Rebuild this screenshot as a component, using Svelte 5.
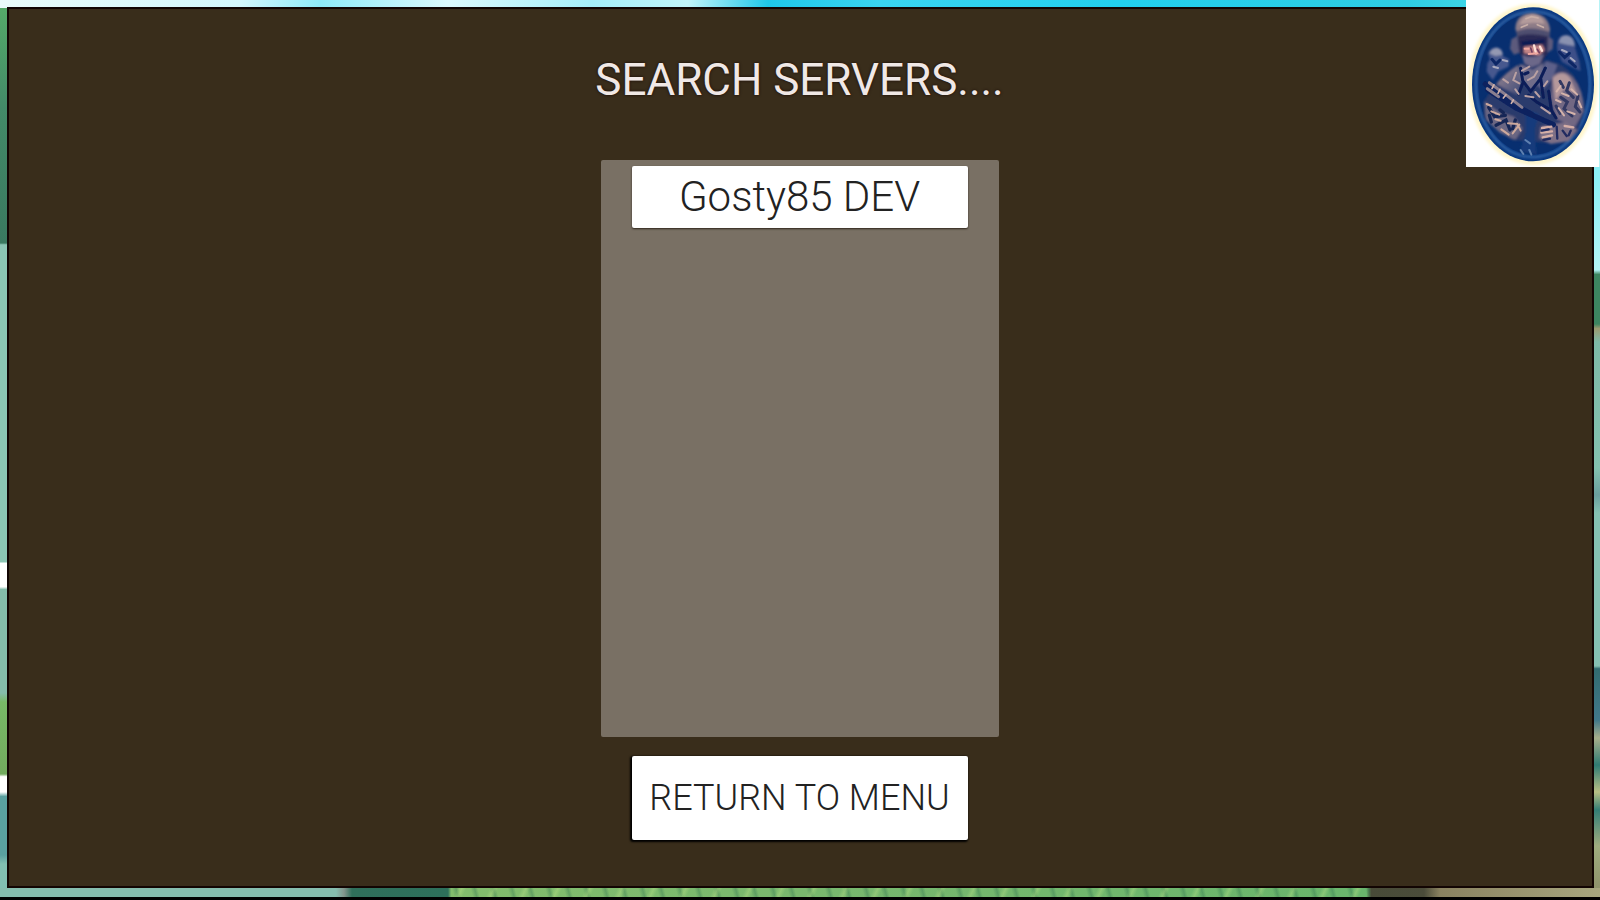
<script>
  const servers = [{ id: 1, name: 'Gosty85 DEV' }];
</script>

<div class="scene">
  <main class="panel">
    <h1>SEARCH SERVERS....</h1>
    <ul class="servers">
      {#each servers as server (server.id)}
        <li><button class="btn server" type="button">{server.name}</button></li>
      {/each}
    </ul>
    <button class="btn back" type="button">RETURN TO MENU</button>
  </main>

  <div class="logo">
    <svg viewBox="48 0 402 501" preserveAspectRatio="none" aria-hidden="true">
      <defs>
        <clipPath id="medal"><ellipse cx="249" cy="253" rx="183" ry="231" /></clipPath>
        <linearGradient id="cloth" x1="0" y1="0" x2="1" y2="1">
          <stop offset="0" stop-color="#a08a92" />
          <stop offset="1" stop-color="#3d4a78" />
        </linearGradient>
        <filter id="halo"><feGaussianBlur stdDeviation="5" /></filter>
        <filter id="soft"><feGaussianBlur stdDeviation="3" /></filter>
        <filter id="fine"><feGaussianBlur stdDeviation="2" /></filter>
      </defs>
      <ellipse cx="249" cy="253" rx="194" ry="242" fill="#fff6cc" filter="url(#halo)" />
      <g clip-path="url(#medal)">
        <rect x="48" width="402" height="501" fill="#0a3880" />
        <ellipse cx="249" cy="253" rx="171" ry="218" fill="none" stroke="#2f62a4" stroke-width="7" filter="url(#soft)" />
        <ellipse cx="249" cy="253" rx="164" ry="211" fill="#082f70" />
        <g filter="url(#soft)">
          <path d="M110 215 L112 190 L120 178 L114 160 Q122 142 140 142 Q160 145 158 168 L178 178 L176 200 L145 214 L128 240 Z" fill="#46588e" />
          <path d="M118 160 Q125 144 142 144 Q156 148 158 164 L136 168 Z" fill="#9499b2" />
          <path d="M322 150 Q316 106 348 105 Q376 106 376 146 L388 184 L392 214 L364 200 L336 186 Z" fill="#3e5088" />
          <path d="M326 128 Q330 106 350 106 Q372 110 374 138 L350 134 Z" fill="#8a92b0" />
          <path d="M138 250 Q164 216 204 194 L294 180 Q346 194 370 226 Q400 270 402 330 L382 398 L316 430 L184 420 L102 350 L104 300 Z" fill="#2b3a6c" />
          <path d="M140 252 Q170 218 204 196 L216 240 L204 286 L164 266 Z" fill="url(#cloth)" />
          <path d="M288 184 L322 194 L308 234 L278 270 L254 250 Z" fill="#5d608a" />
          <path d="M210 192 L248 210 L280 190 L270 246 L242 270 L208 236 Z" fill="#716d8a" />
          <path d="M308 226 Q340 204 368 232 Q402 270 402 334 L374 382 L318 356 L302 296 Z" fill="#726783" />
          <path d="M308 234 Q338 206 360 234 L380 280 L342 268 L316 302 Z" fill="#b5989b" />
          <path d="M102 304 L144 334 L192 350 L218 386 L196 420 L150 398 L108 360 Z" fill="#6b6682" />
          <path d="M272 380 L348 366 L382 390 L356 424 L302 432 L268 414 Z" fill="#7e7086" />
          <path d="M226 328 L268 342 L254 390 L260 464 L210 454 L226 400 Z" fill="#123b7b" />
          <path d="M196 86 Q198 42 246 39 Q294 42 300 88 L296 118 L206 112 Z" fill="#8d7b87" />
          <path d="M208 74 Q218 44 249 43 Q276 45 284 72 L250 68 Z" fill="#b49b9b" />
          <path d="M198 94 Q246 76 300 96 L298 116 Q244 96 202 114 Z" fill="#504f70" />
          <path d="M204 108 Q244 96 298 110 L296 156 L270 194 L230 190 L206 156 Z" fill="#2b2a55" />
          <path d="M222 140 L276 134 L284 150 L268 166 L222 160 Z" fill="#c58687" />
          <path d="M216 164 Q246 178 282 162 L270 192 L244 202 L222 188 Z" fill="#6c6789" />
          <path d="M184 118 L202 108 L208 158 L192 164 L180 146 Z M294 108 L310 120 L308 148 L292 158 Z" fill="#5d5a7b" />
          <path d="M214 124 L286 118 L284 130 L216 138 Z" fill="#101c52" />
        </g>
        <g fill="none" stroke-linecap="round" filter="url(#fine)">
          <path d="M106 252 L174 304 L244 342 M114 270 L198 324 L310 374" stroke="#0a205e" stroke-width="16" />
          <path d="M118 248 L170 286 L216 322 M112 266 L146 290" stroke="#8b7f8f" stroke-width="9" />
          <path d="M132 254 L126 266 M150 268 L144 280 M168 284 L160 294 M190 300 L184 310" stroke="#d2b3ab" stroke-width="5" />
          <path d="M212 205 L218 242 L242 274 L270 238 M224 222 L234 218 M218 250 L206 282 M286 204 L272 234 L280 292 M236 286 L260 306 L294 326 M296 274 L304 330 L318 354" stroke="#081d58" stroke-width="9" />
          <path d="M198 218 L190 240 L208 250 M216 212 L238 200 M234 240 L252 230 L262 214 M226 288 L250 292 M274 322 L300 340 M292 244 L282 258 M256 276 L268 290 M196 268 L206 282 M160 238 L174 248" stroke="#b9a0a2" stroke-width="6" />
          <path d="M330 244 L340 262 M358 248 L350 272 L370 292 M332 292 L352 306 L342 326 L366 348 M384 288 L376 320 L390 336 M318 318 L330 340" stroke="#303862" stroke-width="9" />
          <path d="M320 274 L332 258 M364 268 L382 284 M352 334 L374 342 M326 324 L342 346 M336 280 L356 288 M386 304 L394 322 M318 300 L332 306" stroke="#d5b3aa" stroke-width="6" />
          <path d="M116 322 L134 350 L166 346 M138 376 L168 360 L180 390 M118 346 L124 366 M196 360 L188 386 M150 330 L160 338" stroke="#172756" stroke-width="10" />
          <path d="M124 334 L148 344 M174 370 L202 372 L212 392 M154 388 L176 404 M188 400 L208 374 M110 312 L124 318 M136 358 L152 362" stroke="#cda99d" stroke-width="6" />
          <path d="M276 384 L304 380 M274 398 L306 394 M278 412 L306 406 M344 378 L370 382" stroke="#d5aea7" stroke-width="7" />
          <path d="M320 380 L322 416 M338 392 L350 408 M276 392 L296 388 M280 420 L300 416 M362 392 L356 406" stroke="#202c60" stroke-width="7" />
          <path d="M212 450 L220 462 M238 450 L244 464 M226 420 L240 430" stroke="#5e80b0" stroke-width="6" />
          <path d="M252 136 L258 160 M270 140 L276 152" stroke="#ffe0d6" stroke-width="7" />
          <path d="M224 146 L236 146 M236 162 L262 160" stroke="#f0a79f" stroke-width="6" />
          <path d="M242 144 L246 156 M262 148 L268 158" stroke="#743f61" stroke-width="5" />
          <path d="M228 56 L244 50 L264 54 M214 82 L232 74 M262 74 L280 82" stroke="#c8aea7" stroke-width="5" />
          <path d="M328 156 L344 172 L358 160 M358 184 L376 200 M126 178 L138 192 L150 180" stroke="#0b2765" stroke-width="9" />
          <path d="M336 150 L350 156 M362 174 L374 184 M158 180 L172 184 M130 200 L144 204" stroke="#a8a9be" stroke-width="6" />
        </g>
      </g>
    </svg>
  </div>
</div>

<style>
  :global(body) {
    margin: 0;
    background: #000;
  }

  .scene {
    position: relative;
    box-sizing: border-box;
    display: flex;
    min-height: 100vh;
    padding: 7px 6px 12px 7px;
    font-family: Roboto, 'Liberation Sans', sans-serif;
    background:
      linear-gradient(#000, #000) bottom / 100% 3px no-repeat,
      linear-gradient(90deg, #e9fbfa, #d4f7fd 15%, #8eeaf9 20%, #dcf9fd 28%, #a5eefa 37%, #c2f4fa 43%, #1fc7e9 48%, #3ad4f1 55%, #22cfee 70%, #2fcce2 88%, #5de6ef)
        top / 100% 8px no-repeat,
      repeating-linear-gradient(115deg, #0000 0 7px, #c5e98b55 11px, #0000 15px 29px)
        450px calc(100% - 3px) / calc(100% - 680px) 9px no-repeat,
      repeating-linear-gradient(75deg, #0000 0 4px, #27694b55 8px, #0000 11px 18px)
        450px calc(100% - 3px) / calc(100% - 680px) 9px no-repeat,
      linear-gradient(90deg, #85bdae 21%, #82958d 21.5%, #2f6f5b 22%, #2d705b 28%, #83bd6d 28.2%, #79b86e 50%, #69b56c 85.4%, #484b38 85.7%, #4b4c3a 89%, #8a8260 90%, #a8a77f)
        bottom 3px left / 100% 9px no-repeat,
      linear-gradient(#56ac69, #438a68 12%, #3a7960 27%, #8bc5b4 27.2%, #8bc5b4 62.4%, #fff 62.6%, #fff 65.2%, #84bcab 65.5%, #84bcab 77%, #78b966 78%, #72aa5e 86%, #fff 86.3%, #fff 88%, #5aa0a0 88.5%, #5aa0a0 95%, #82bfb2 96%)
        left / 50% 100% no-repeat,
      linear-gradient(#8df0f7 20%, #b2f4f6 30%, #3d8560 30.5%, #3d8560 36%, #9b9a70 36.5%, #7eb9a7 38%, #83c1af 52%, #6a9e9e 55%, #85c0b2 57%, #85c0b2 74%, #326b70 74.3%, #41788a 80%, #a7ae8a 82%, #2f7b73 85%, #b8bf84 88%, #347e76 90%, #9fac7e 94%, #8a8b65)
        right / 50% 100% no-repeat;
  }

  .panel {
    box-sizing: border-box;
    flex: 1;
    display: flex;
    flex-direction: column;
    align-items: center;
    padding: 38px 18px 46px 16px;
    border: 2px solid #120503;
    background: #392d1b;
  }

  h1 {
    margin: 0 0 47px;
    font-size: 44px;
    line-height: 66px;
    font-weight: 400;
    color: #f0e8e6;
    text-shadow: 0 0 3px #160600;
  }

  .servers {
    box-sizing: border-box;
    flex: 1;
    width: 398px;
    margin: 0 0 19px;
    padding: 6px 31px;
    border-radius: 2px;
    list-style: none;
    background: #797064;
  }

  .btn {
    display: block;
    box-sizing: border-box;
    width: 336px;
    padding: 0;
    border: 0;
    border-radius: 2px;
    background: #fff;
    color: #222;
    font-family: inherit;
    font-weight: 300;
    white-space: nowrap;
    cursor: pointer;
  }

  .server {
    height: 62px;
    font-size: 42px;
    line-height: 62px;
    box-shadow: 0 1px 2px #2d251b;
  }

  .back {
    height: 84px;
    font-size: 36px;
    line-height: 84px;
    box-shadow: -1px 1px 2px 1px #000;
  }

  .logo {
    position: absolute;
    top: 0;
    right: 0;
    width: 134px;
    height: 167px;
    background: linear-gradient(#b5f3f6, #b5f3f6) right / 1px 100% no-repeat #fff;
  }

  .logo svg {
    display: block;
    width: 100%;
    height: 100%;
  }
</style>
